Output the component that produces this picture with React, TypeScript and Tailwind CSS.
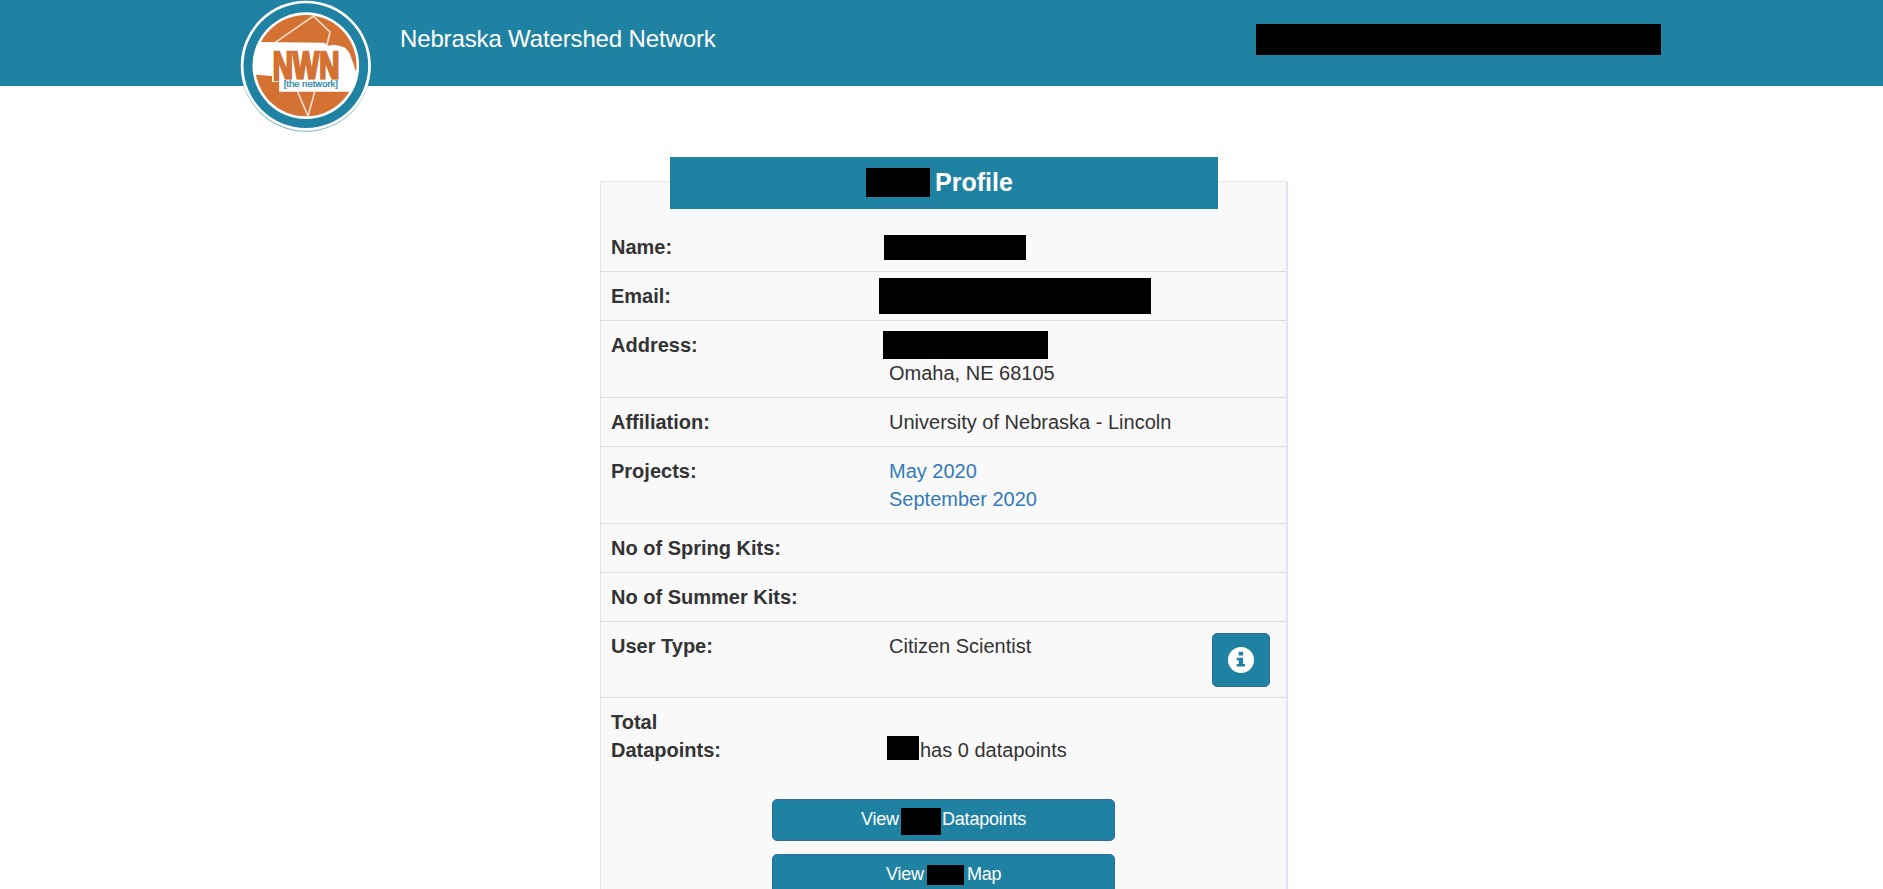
import type { ReactNode } from "react";

function Logo() {
  return (
    <svg viewBox="0 0 450 420" className="absolute left-[230px] top-0 h-[140px] w-[150px]">
      <circle cx="227" cy="200" r="195" fill="#7fb3c6" />
      <circle cx="227.500" cy="197" r="195" fill="#fff" />
      <circle cx="227.500" cy="197" r="187" fill="#2082a2" />
      <circle cx="227.500" cy="197" r="160" fill="#fff" />
      <circle cx="227.500" cy="197" r="152" fill="#d47234" />
      <path d="M135 128L250 48L300 96L290 138M203 276L234 348L254 276" fill="none" stroke="#f6dccb" strokeWidth="5" />
      <path
        d="M90 126L283 128L294 137L312 134L330 138L346 143L358 158L364 174L370 190L376 212L382 206L382 214L365 275L148 275L148 246L126 246L126 228L74 224L72 180Z"
        fill="#fff"
      />
      <text x="128" y="240" fontSize="120" fontWeight="700" textLength="200" lengthAdjust="spacingAndGlyphs" fill="#d47234" stroke="#d47234" strokeWidth="8" fontFamily="Liberation Sans Narrow, Liberation Sans, sans-serif">
        NWN
      </text>
      <rect x="148" y="239" width="178" height="34" fill="#fff" />
      <text x="161" y="262" fontSize="26" fontWeight="400" textLength="163" lengthAdjust="spacingAndGlyphs" fill="#2082a2" stroke="#2082a2" strokeWidth="0.7" fontFamily="Liberation Sans, sans-serif">
        [the network]
      </text>
    </svg>
  );
}

function InfoIcon() {
  return (
    <svg viewBox="0 0 26 26" className="h-[26px] w-[26px]">
      <circle cx="13" cy="13" r="13" fill="#fff" />
      <path d="M10.700 4.800h4.400v3.700h-4.400zM8.700 10.700h6.400v6.400h1.900v2.500H8.700v-2.500h2v-3.900h-2z" fill="#2082a2" />
    </svg>
  );
}

function Row({ label, height, children }: { label: ReactNode; height: string; children?: ReactNode }) {
  return (
    <div className={`flex shrink-0 border-b border-[#ddd] pl-[10px] pt-[10px] ${height}`}>
      <div className="w-[278px] shrink-0 font-bold">{label}</div>
      <div className="flex-1">{children}</div>
    </div>
  );
}

export default function App() {
  return (
    <div className="h-[889px] overflow-hidden bg-white font-['Liberation_Sans',Arial,sans-serif] text-[20px] leading-7 text-[#333]">
      <header className="relative flex h-[86px] items-start justify-between bg-[#2082a2] pl-[400px] pr-[222px] pt-6">
        <Logo />
        <span className="whitespace-nowrap text-[24px] leading-[30px] tracking-[-0.14px] text-white">Nebraska Watershed Network</span>
        <div className="h-[31px] w-[405px] bg-black" />
      </header>

      <main className="ml-[600px] mt-[71px] flex w-[687px] flex-col">
        <h1 className="z-10 ml-[70px] flex h-[52px] w-[548px] items-start bg-[#2082a2] pl-[196px] pt-[11px] text-[25px] font-bold leading-[29px] text-white">
          <span className="h-[29px] w-16 bg-black" />
          <span className="ml-[5px]">Profile</span>
        </h1>
        <section className="-mt-[28px] flex h-[720px] flex-col border border-[#e4e4f0] bg-[#f9f9f9] pt-[41px] shadow-[1px_1px_1px_#e4e4f0]">
          <Row label="Name:" height="h-[49px]">
            <div className="-ml-[5px] mt-[2px] h-[25px] w-[142px] bg-black" />
          </Row>
          <Row label="Email:" height="h-[49px]">
            <div className="-ml-[10px] -mt-[4px] h-[36px] w-[272px] bg-black" />
          </Row>
          <Row label="Address:" height="h-[77px]">
            <div className="-ml-[6px] h-[28px] w-[165px] bg-black" />
            <div>Omaha, NE 68105</div>
          </Row>
          <Row label="Affiliation:" height="h-[49px]">
            University of Nebraska - Lincoln
          </Row>
          <Row label="Projects:" height="h-[77px]">
            <a href="#may" className="block text-[#337ab7]">May 2020</a>
            <a href="#september" className="block text-[#337ab7]">September 2020</a>
          </Row>
          <Row label="No of Spring Kits:" height="h-[49px]" />
          <Row label="No of Summer Kits:" height="h-[49px]" />
          <Row label="User Type:" height="h-[76px]">
            <div className="flex items-start justify-between pr-4">
              <span>Citizen Scientist</span>
              <button className="mt-px flex h-[54px] w-[58px] items-center justify-center rounded-[5px] border border-[#2e6da4] bg-[#2082a2]">
                <InfoIcon />
              </button>
            </div>
          </Row>
          <div className="flex h-[101px] shrink-0 pl-[10px] pt-[10px]">
            <div className="w-[276px] shrink-0 font-bold">
              Total
              <br />
              Datapoints:
            </div>
            <div className="flex pt-7">
              <span className="h-[24px] w-8 bg-black" />
              <span className="ml-px">has 0 datapoints</span>
            </div>
          </div>
          <div className="flex flex-col gap-[13px] pl-[171px] text-[18px] leading-[26px] tracking-[-0.2px] text-white">
            <button className="flex h-[42px] w-[343px] items-start rounded-[5px] border border-[#2e6da4] bg-[#2082a2] pl-[88px] pt-[6px]">
              <span className="w-[40px] shrink-0 whitespace-nowrap text-left">View</span>
              <span className="mt-[2px] h-[27px] w-[40px] shrink-0 bg-black" />
              <span className="ml-[1px]">Datapoints</span>
            </button>
            <button className="flex h-[42px] w-[343px] items-start rounded-[5px] border border-[#2e6da4] bg-[#2082a2] pl-[113px] pt-[6px]">
              <span className="w-[41px] shrink-0 whitespace-nowrap text-left">View</span>
              <span className="mt-[4px] h-[20px] w-[37px] shrink-0 bg-black" />
              <span className="ml-[3px]">Map</span>
            </button>
          </div>
        </section>
      </main>
    </div>
  );
}
